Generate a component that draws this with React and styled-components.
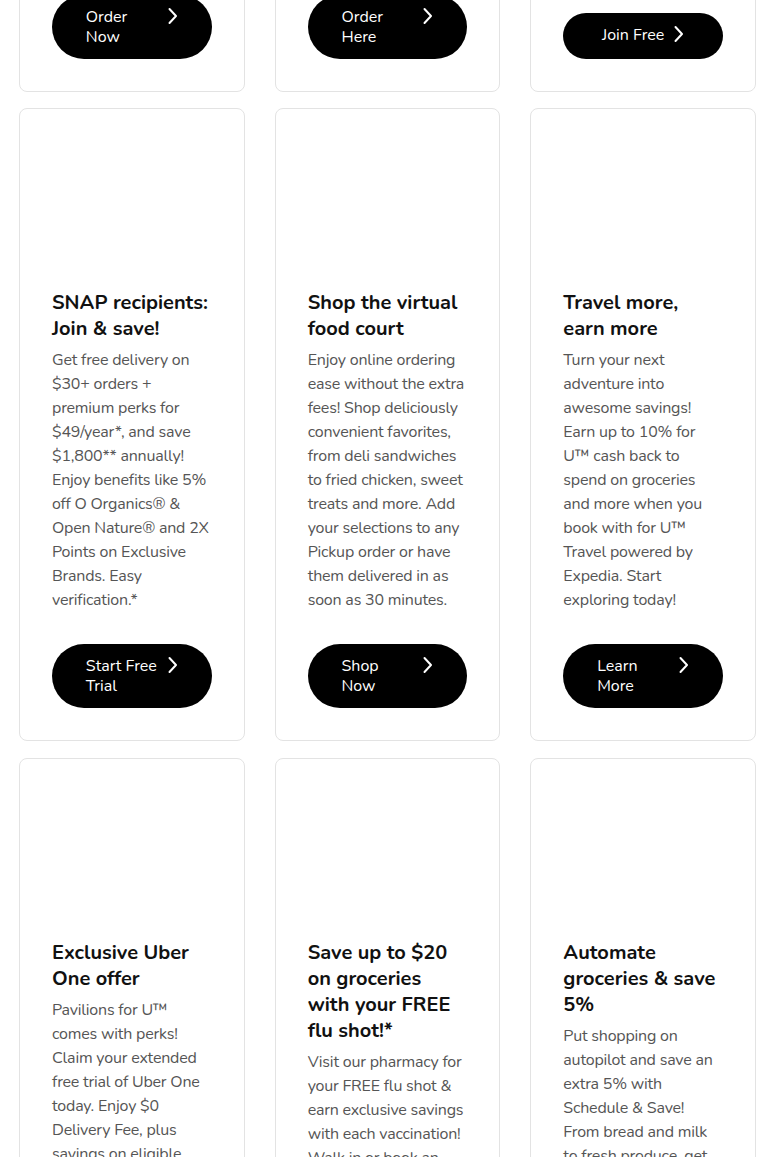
import React from "react"
import styled, { createGlobalStyle } from "styled-components"

const GlobalStyle = createGlobalStyle`
  html, body {
    margin: 0;
    padding: 0;
    background: #fff;
  }
  body {
    font-family: "Nunito", "Lato", "Noto Sans", sans-serif;
    -webkit-font-smoothing: antialiased;
  }
`

const Page = styled.div`
  padding: 0 19px;
  height: 1157px;
  overflow: hidden;
`

// the first row is scrolled mostly out of view, only its bottom shows
const TopClip = styled.div`
  height: 92px;
  overflow: hidden;
  display: flex;
  flex-direction: column;
  justify-content: flex-end;
  margin-bottom: 16px;
`

const Grid = styled.div`
  display: grid;
  grid-template-columns: repeat(3, 1fr);
  column-gap: 30px;
  row-gap: 17px;
  flex-shrink: 0;
`

const Card = styled.div`
  display: flex;
  flex-direction: column;
  border: 1px solid #e3e3e3;
  border-radius: 8px;
  padding: 32px;
  background: #fff;
`

const ImageSlot = styled.div`
  height: 149px;
`

const Title = styled.h3`
  margin: 0 0 6px;
  font-size: 20px;
  line-height: 26px;
  font-weight: 700;
  color: #111;
`

const Body = styled.p`
  margin: 0 0 32px;
  font-size: 16px;
  line-height: 24px;
  letter-spacing: -0.2px;
  color: #555;
`

const Button = styled.a`
  margin-top: auto;
  display: flex;
  align-items: flex-start;
  justify-content: center;
  gap: 8px;
  padding: 12px 0;
  border-radius: 32px;
  background: #000;
  color: #fff;
  font-size: 16px;
  line-height: 20px;
  text-decoration: none;
  cursor: pointer;
`

const Label = styled.span`
  width: ${(p) => (p.$lines > 1 ? "72px" : "auto")};
  span {
    display: block;
  }
`

const Chevron = () => (
  <svg width="12" height="22" viewBox="0 0 12 22" fill="none">
    <path
      d="M3.5 2 L10 9 L3.5 16"
      stroke="#fff"
      strokeWidth="2"
      strokeLinecap="round"
      strokeLinejoin="round"
    />
  </svg>
)

const topCards = [
  {
    title: "Fresh deli, ready when you are",
    body: "Build your order online and skip the line at the deli counter.",
    cta: ["Order", "Now"],
  },
  {
    title: "Custom cakes for every occasion",
    body: "Pick the size, flavor and design, then pick it up in store.",
    cta: ["Order", "Here"],
  },
  {
    title: "Join for U™ and save",
    body: "Members get weekly deals, rewards and personalized offers.",
    cta: ["Join Free"],
  },
]

const cards = [
  {
    title: "SNAP recipients: Join & save!",
    body:
      "Get free delivery on $30+ orders + premium perks for $49/year*, and save $1,800** annually! Enjoy benefits like 5% off O Organics® & Open Nature® and 2X Points on Exclusive Brands. Easy verification.*",
    cta: ["Start Free", "Trial"],
  },
  {
    title: "Shop the virtual food court",
    body:
      "Enjoy online ordering ease without the extra fees! Shop deliciously convenient favorites, from deli sandwiches to fried chicken, sweet treats and more. Add your selections to any Pickup order or have them delivered in as soon as 30 minutes.",
    cta: ["Shop", "Now"],
  },
  {
    title: "Travel more, earn more",
    body:
      "Turn your next adventure into awesome savings! Earn up to 10% for U™ cash back to spend on groceries and more when you book with for U™ Travel powered by Expedia. Start exploring today!",
    cta: ["Learn", "More"],
  },
  {
    title: "Exclusive Uber One offer",
    body:
      "Pavilions for U™ comes with perks! Claim your extended free trial of Uber One today. Enjoy $0 Delivery Fee, plus savings on eligible orders from your favorite restaurants and stores.",
    cta: ["Learn", "More"],
  },
  {
    title: "Save up to $20 on groceries with your FREE flu shot!*",
    body:
      "Visit our pharmacy for your FREE flu shot & earn exclusive savings with each vaccination! Walk in or book an appointment today.",
    cta: ["Book", "Now"],
  },
  {
    title: "Automate groceries & save 5%",
    body:
      "Put shopping on autopilot and save an extra 5% with Schedule & Save! From bread and milk to fresh produce, get your essentials delivered on repeat.",
    cta: ["Get", "Started"],
  },
]

const OfferCard = ({ title, body, cta }) => (
  <Card>
    <ImageSlot />
    <Title>{title}</Title>
    <Body>{body}</Body>
    <Button>
      <Label $lines={cta.length}>
        {cta.map((line) => (
          <span key={line}>{line}</span>
        ))}
      </Label>
      <Chevron />
    </Button>
  </Card>
)

export default function App() {
  return (
    <>
      <GlobalStyle />
      <Page>
        <TopClip>
          <Grid>
            {topCards.map((c) => (
              <OfferCard key={c.title} {...c} />
            ))}
          </Grid>
        </TopClip>
        <Grid>
          {cards.map((c) => (
            <OfferCard key={c.title} {...c} />
          ))}
        </Grid>
      </Page>
    </>
  )
}
